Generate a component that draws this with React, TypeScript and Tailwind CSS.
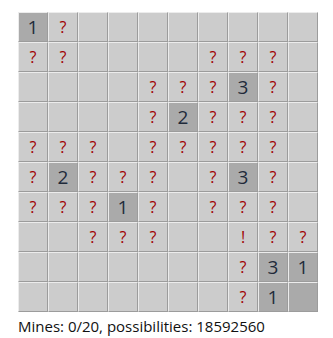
import { memo } from "react";

// Board state: "" = unknown, "?" = maybe mine, "!" = flagged, digits / "r" = revealed
const BOARD: string[][] = [
  ["1", "?", "", "", "", "", "", "", "", ""],
  ["?", "?", "", "", "", "", "?", "?", "?", ""],
  ["", "", "", "", "?", "?", "?", "3", "?", ""],
  ["", "", "", "", "?", "2", "?", "?", "?", ""],
  ["?", "?", "?", "", "?", "?", "?", "?", "?", ""],
  ["?", "2", "?", "?", "?", "", "?", "3", "?", ""],
  ["?", "?", "?", "1", "?", "", "?", "?", "?", ""],
  ["", "", "?", "?", "?", "", "", "!", "?", "?"],
  ["", "", "", "", "", "", "", "?", "3", "1"],
  ["", "", "", "", "", "", "", "?", "1", "r"],
];

function isRevealed(v: string) {
  return v === "r" || /^[0-9]$/.test(v);
}

const Cell = memo(function Cell({ value }: { value: string }) {
  const revealed = isRevealed(value);
  const isNumber = /^[0-9]$/.test(value);

  return (
    <div
      className={`
        w-[30px] h-[30px] flex items-center justify-center
        border-t border-l border-t-[#ececec] border-l-[#ececec]
        border-b border-r border-b-[#9c9c9c] border-r-[#9c9c9c]
        ${revealed ? "bg-[#aaaaaa]" : "bg-[#cccccc]"}
      `}
    >
      {isNumber && <span className="text-[19px] leading-none text-[#1f2a3a]">{value}</span>}
      {(value === "?" || value === "!") && (
        <span className="text-[16px] leading-none text-[#a00000]">{value}</span>
      )}
    </div>
  );
});

export default function App() {
  return (
    <div className="w-[333px] h-[338px] bg-white pl-[18px] pt-[12px] font-['Segoe_UI','Open_Sans','Noto_Sans',sans-serif]">
      <div className="grid grid-cols-[repeat(10,30px)] w-[300px]">
        {BOARD.flatMap((row, r) =>
          row.map((value, c) => <Cell key={`${r}-${c}`} value={value} />)
        )}
      </div>
      <div className="mt-[4px] text-[15px] leading-[20px] text-[#111]">
        Mines: 0/20, possibilities: 18592560
      </div>
    </div>
  );
}
